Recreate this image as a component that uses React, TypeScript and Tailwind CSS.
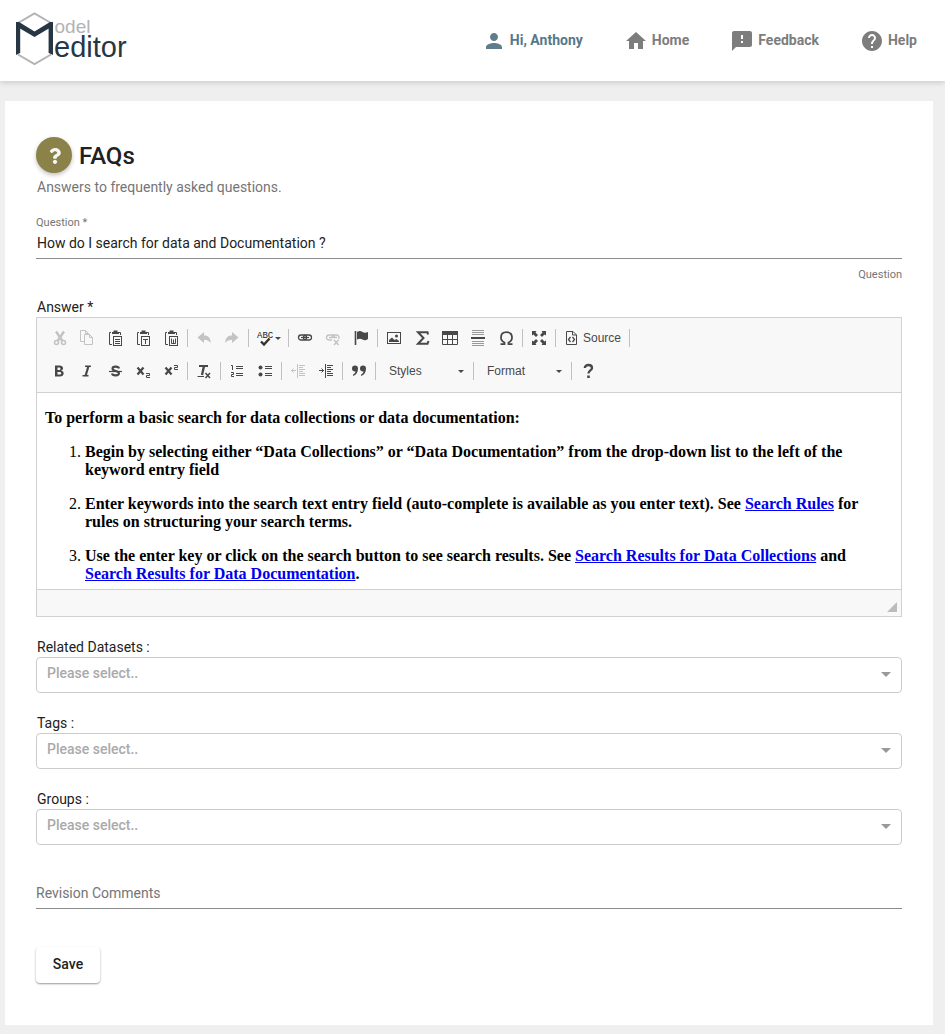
import type { ReactNode } from "react";
import { FaQuestion } from "react-icons/fa";
import { MdFeedback, MdHelp, MdHome, MdPerson } from "react-icons/md";

const sans = "font-['Liberation_Sans',Arial,sans-serif]";

function Logo() {
  return (
    <a href="#" aria-label="Model Meditor" className="block">
      <svg width="114" height="56" viewBox="0 0 114 56" aria-hidden="true">
        <path d="M3 12 L19.500 2.500 L36 12 M3 43.500 L19.500 53 L36 43.500" fill="none" stroke="#b3b3b3" strokeWidth="2" />
        <path d="M5.200 16V42M33.600 16V42" fill="none" stroke="#c4c4c4" strokeWidth="1" />
        <path d="M1 11 L4 11 L19.500 20.500 L35 11 L38 11 V44 L33.800 42 V17.500 L19.500 26 L5 17.500 V42 L1 44 Z" fill="#263645" />
        <text x="39.500" y="22" fontSize="19" fill="#b3b3b3" className={sans}>odel</text>
        <text x="39" y="46" fontSize="29" fill="#263645" className={sans}>editor</text>
      </svg>
    </a>
  );
}

function NavLink({ icon, label, active }: { icon: ReactNode; label: string; active?: boolean }) {
  return (
    <a
      href="#"
      className={`flex items-center gap-1 text-2xl ${active ? "text-[#607d8b]" : "text-[#7d7d7d]"}`}
    >
      {icon}
      <span className={`pb-0.5 text-sm font-bold ${active ? "text-[#56798a]" : "text-[#7d7d7d]"}`}>{label}</span>
    </a>
  );
}

function Glyph({ children, muted }: { children: ReactNode; muted?: boolean }) {
  return (
    <svg
      width="16"
      height="16"
      viewBox="0 0 16 16"
      fill="none"
      stroke="currentColor"
      className={muted ? "text-[#c3c3c3]" : "text-[#484848]"}
      aria-hidden="true"
    >
      {children}
    </svg>
  );
}

function Tool({ label, muted, children }: { label: string; muted?: boolean; children: ReactNode }) {
  return (
    <button type="button" aria-label={label} disabled={muted} className="flex h-7 w-7 items-center justify-center">
      <Glyph muted={muted}>{children}</Glyph>
    </button>
  );
}

function Separator() {
  return <span className="mx-0.5 h-[18px] w-px bg-[#c0c0c0]" />;
}

function SmallCaret() {
  return (
    <svg width="6" height="3" viewBox="0 0 6 3" className="pointer-events-none" aria-hidden="true">
      <path d="M0 0H6L3 3Z" fill="#484848" />
    </svg>
  );
}

function Clipboard({ children }: { children: ReactNode }) {
  return (
    <>
      <path d="M4 2.500H2.500V14.500H5M11 2.500H13.500V5" />
      <path d="M5 4V2H6.500V0.500H10.500V2H12V4Z" fill="currentColor" stroke="none" />
      <rect x="6.500" y="6.500" width="8" height="9" fill="#f8f8f8" />
      {children}
    </>
  );
}

function Combo({ label }: { label: string }) {
  return (
    <div className="relative flex h-7 items-center">
      <select
        aria-label={label}
        className={`h-7 w-[93px] appearance-none bg-transparent pl-[11px] text-xs text-[#484848] ${sans}`}
      >
        <option>{label}</option>
      </select>
      <span className="pointer-events-none absolute right-[7px]">
        <SmallCaret />
      </span>
    </div>
  );
}

function Toolbar() {
  return (
    <div role="toolbar" className="flex flex-col gap-[5px] border-b border-[#d1d1d1] bg-[#f8f8f8] px-2 pt-1.5 pb-[7px]">
      <div className="flex flex-wrap items-center">
        <Tool label="Cut" muted>
          <path d="M5 1.500L11.500 11M13 1.500L6.500 11" strokeWidth="2.400" />
          <circle cx="5.500" cy="12.500" r="2" strokeWidth="1.500" />
          <circle cx="12.500" cy="12.500" r="2" strokeWidth="1.500" />
        </Tool>
        <Tool label="Copy" muted>
          <path d="M5 11.500H1.500V0.500H6.500L9.500 3.500V4M6.500 0.500V3.500H9" />
          <path d="M5.500 4.500H10.500L13.500 7.500V14.500H5.500ZM10.500 4.500V7.500H13.500" fill="#f8f8f8" />
        </Tool>
        <Tool label="Paste">
          <Clipboard>
            <path d="M8 9.500H13M8 11.500H13M8 13.500H13" />
          </Clipboard>
        </Tool>
        <Tool label="Paste as plain text">
          <Clipboard>
            <path d="M8 9.500H13M10.500 9.500V14" />
          </Clipboard>
        </Tool>
        <Tool label="Paste from Word">
          <Clipboard>
            <path d="M8.500 8.500V13.500H12.500V8.500M10.500 9.500V13" />
          </Clipboard>
        </Tool>
        <Separator />
        <Tool label="Undo" muted>
          <path d="M1.500 7.500L8 2V5.500C12.500 5.500 14.500 8 14.800 13C13 10.500 11 9.800 8 9.800V13Z" fill="currentColor" stroke="none" />
        </Tool>
        <Tool label="Redo" muted>
          <path d="M14.500 7.500L8 2V5.500C3.500 5.500 1.500 8 1.200 13C3 10.500 5 9.800 8 9.800V13Z" fill="currentColor" stroke="none" />
        </Tool>
        <Separator />
        <button type="button" aria-label="Spell check" className="flex h-7 w-[35px] items-center gap-0.5 pl-1.5">
          <Glyph>
            <text x="0" y="8" fontSize="9" fill="#222" stroke="none" className="font-['Liberation_Mono',monospace]">ABC</text>
            <path d="M4 11.500L7 14.500L12.500 8.500" strokeWidth="2.400" stroke="#333" />
          </Glyph>
          <SmallCaret />
        </button>
        <Separator />
        <Tool label="Link">
          <rect x="1.500" y="5" width="8" height="5" rx="2.500" strokeWidth="1.300" />
          <rect x="6.500" y="5" width="8" height="5" rx="2.500" strokeWidth="1.300" />
          <path d="M4 7.500H12" strokeWidth="1.200" />
        </Tool>
        <Tool label="Unlink" muted>
          <path d="M7 10H4A2.500 2.500 0 0 1 4 5H7A2.500 2.500 0 0 1 9.500 7.500M7 7.500A2.500 2.500 0 0 1 9 5H12A2.500 2.500 0 0 1 13.500 9M4 7.500H12" strokeWidth="1.300" />
          <path d="M9 10L13.500 15M13.500 10L9 15" strokeWidth="1.500" />
        </Tool>
        <Tool label="Anchor">
          <path d="M2.500 1V15" strokeWidth="1.600" />
          <path d="M4 2C6.500 0.500 8 1 9.500 2C11 3 13 3 15 2V9C13 10.500 11 10.500 9.500 9.500C8 8.500 6 8.500 4 9.500Z" fill="currentColor" stroke="none" />
        </Tool>
        <Separator />
        <Tool label="Image">
          <rect x="1.500" y="2.500" width="13" height="11" />
          <path d="M3 12V10L6 7.500L8.500 10L10.500 9L13 11V12Z" fill="currentColor" stroke="none" />
          <circle cx="10.500" cy="6" r="1.500" fill="currentColor" stroke="none" />
        </Tool>
        <Tool label="Math">
          <path d="M14 4.500L13.500 2.200H4L9.500 8L4 13.800H13.500L14.500 11" strokeWidth="2" />
        </Tool>
        <Tool label="Table">
          <path d="M0 1H16V5H0Z" fill="currentColor" stroke="none" />
          <path d="M0.500 5V14.500H15.500V5M0 9.500H16M5.500 5V14.500M10.500 5V14.500" />
        </Tool>
        <Tool label="Horizontal line">
          <path d="M2 0.500H14M2 2.500H14M2 4.500H14M2 11.500H14M2 13.500H14M2 15.500H14" stroke="#999" />
          <path d="M1 8H15" strokeWidth="2" />
        </Tool>
        <Tool label="Special character">
          <path d="M2.500 14.200H6.500V12.500C4 11.500 3 9.500 3 7.500C3 4 5.500 2.200 8.500 2.200S14 4 14 7.500C14 9.500 13 11.500 10.500 12.500V14.200H14.500" strokeWidth="1.800" />
        </Tool>
        <Separator />
        <Tool label="Maximize">
          <path d="M1 1H5.500L4.500 2.500L7 5L5 7L2.500 4.500L1 5.500ZM15 1H10.500L11.500 2.500L9 5L11 7L13.500 4.500L15 5.500ZM1 15H5.500L4.500 13.500L7 11L5 9L2.500 11.500L1 10.500ZM15 15H10.500L11.500 13.500L9 11L11 9L13.500 11.500L15 10.500Z" fill="currentColor" stroke="none" />
        </Tool>
        <Separator />
        <button type="button" className={`flex h-7 w-[69px] items-center gap-[3px] pl-1.5 text-xs text-[#484848] ${sans}`}>
          <Glyph>
            <path d="M2.500 1.500H9L12.500 5V14.500H2.500ZM8.500 1.500V5H12.500" />
            <path d="M6.500 7L4.500 9.500L6.500 12M8.500 7L10.500 9.500L8.500 12" strokeWidth="1.300" />
          </Glyph>
          Source
        </button>
        <Separator />
      </div>
      <div className="flex flex-wrap items-center">
        <Tool label="Bold">
          <path d="M4 2.500H8.500C13 2.500 13 7.200 10 7.700C14 8 13.500 13.500 9 13.500H4Z" fill="currentColor" stroke="none" />
          <path d="M6.500 4.500H8C10 4.500 10 7 8 7H6.500ZM6.500 8.900H8.500C10.900 8.900 10.900 11.500 8.500 11.500H6.500Z" fill="#f8f8f8" stroke="none" />
        </Tool>
        <Tool label="Italic">
          <path d="M6 3.200H12M3.500 12.800H9.500" strokeWidth="1.400" />
          <path d="M9.500 3L6.500 13" strokeWidth="2.200" />
        </Tool>
        <Tool label="Strikethrough">
          <path d="M12 5.500C11.500 3 5.500 3 5.500 5.800C5.500 8.500 12 7.500 12 10.300C12 13 5.500 13 5 10.500" strokeWidth="2.100" />
          <path d="M2 8.500H15" strokeWidth="1.200" />
        </Tool>
        <Tool label="Subscript">
          <path d="M2.500 4.500L8.500 11.500M8.500 4.500L2.500 11.500" strokeWidth="2.200" />
          <path d="M11 10.500H14.500V12.500H11.500V14.500H15" />
        </Tool>
        <Tool label="Superscript">
          <path d="M2.500 4.500L8.500 11.500M8.500 4.500L2.500 11.500" strokeWidth="2.200" />
          <path d="M11 2.500H14.500V4.500H11.500V6.500H15" />
        </Tool>
        <Separator />
        <Tool label="Remove format">
          <path d="M3 3H12" strokeWidth="2" />
          <path d="M8 3L6 12" strokeWidth="2.300" />
          <path d="M1.500 13.500H8" />
          <path d="M9.500 10L14 15M14 10L9.500 15" strokeWidth="1.500" />
        </Tool>
        <Separator />
        <Tool label="Numbered list">
          <path d="M7 3.500H14M7 5.500H14M7 10.500H14M7 12.500H14" />
          <path d="M2 2.500H3.500V7M2 9.500H4.500V11.500H2.500V13.500H5" />
        </Tool>
        <Tool label="Bulleted list">
          <path d="M8 3.500H15M8 5.500H15M8 10.500H15M8 12.500H15" />
          <circle cx="3.500" cy="4.500" r="2" fill="currentColor" stroke="none" />
          <circle cx="3.500" cy="11.500" r="2" fill="currentColor" stroke="none" />
        </Tool>
        <Separator />
        <Tool label="Decrease indent" muted>
          <path d="M7.500 1V15M9 2.500H15M9 4.500H13M9 6.500H15M9 8.500H13M9 10.500H15M9 12.500H15M1 7.500H6M3.500 5.500L1.500 7.500L3.500 9.500" />
        </Tool>
        <Tool label="Increase indent">
          <path d="M7.500 1V15M9 2.500H15M9 4.500H13M9 6.500H15M9 8.500H13M9 10.500H15M9 12.500H15M1 7.500H6M3.500 5.500L5.500 7.500L3.500 9.500" />
        </Tool>
        <Separator />
        <Tool label="Block quote">
          <path d="M1 5.500A3 3 0 0 1 7 5.500C7 9.500 5 12 2 13V11.500C3.500 10.800 4.300 9.800 4.500 8.500C2.500 8.800 1 7.500 1 5.500ZM9 5.500A3 3 0 0 1 15 5.500C15 9.500 13 12 10 13V11.500C11.500 10.800 12.300 9.800 12.500 8.500C10.500 8.800 9 7.500 9 5.500Z" fill="currentColor" stroke="none" />
        </Tool>
        <Separator />
        <Combo label="Styles" />
        <Separator />
        <Combo label="Format" />
        <Separator />
        <Tool label="About">
          <path d="M4.800 5C4.800 1 12 1 12 5C12 7.500 8.500 7.500 8.500 10.500" strokeWidth="2.300" />
          <path d="M7.200 12.500H9.800V15H7.200Z" fill="currentColor" stroke="none" />
        </Tool>
      </div>
    </div>
  );
}

function DocLink({ children }: { children: ReactNode }) {
  return (
    <a href="#" className="text-[#0000ee] underline">
      {children}
    </a>
  );
}

function Editor() {
  return (
    <div className="border border-[#d1d1d1] bg-white">
      <Toolbar />
      <div
        role="textbox"
        aria-labelledby="answer-label"
        className="px-2 pt-4 pb-1.5 font-['Liberation_Serif','Times_New_Roman',serif] text-base leading-[18px] text-black"
      >
        <p className="font-bold">To perform a basic search for data collections or data documentation:</p>
        <ol className="mt-4 flex list-decimal flex-col gap-4 pl-10">
          <li>
            <strong>
              Begin by selecting either “Data Collections” or “Data Documentation” from the drop-down list to the left
              of the keyword entry field
            </strong>
          </li>
          <li>
            <strong>
              Enter keywords into the search text entry field (auto-complete is available as you enter text). See{" "}
              <DocLink>Search Rules</DocLink> for rules on structuring your search terms.
            </strong>
          </li>
          <li>
            <strong>
              Use the enter key or click on the search button to see search results. See{" "}
              <DocLink>Search Results for Data Collections</DocLink> and{" "}
              <DocLink>Search Results for Data Documentation</DocLink>.
            </strong>
          </li>
        </ol>
      </div>
      <div className="flex h-[27px] items-end justify-end border-t border-[#d1d1d1] bg-[#f8f8f8] pr-1 pb-1">
        <svg width="10" height="10" viewBox="0 0 10 10" aria-hidden="true">
          <path d="M10 0V10H0Z" fill="#bcbcbc" />
        </svg>
      </div>
    </div>
  );
}

function SelectField({ id, label }: { id: string; label: string }) {
  return (
    <div className="mt-5">
      <label htmlFor={id} className="block pl-px text-sm leading-5">
        {label}
      </label>
      <div className="relative">
        <select
          id={id}
          className="block h-9 w-full appearance-none rounded border border-[#ccc] bg-white pb-1 pl-2.5 text-sm font-medium text-[#aaa]"
        >
          <option>Please select..</option>
        </select>
        <svg
          width="10"
          height="5"
          viewBox="0 0 10 5"
          className="pointer-events-none absolute top-[15px] right-[11px]"
          aria-hidden="true"
        >
          <path d="M0 0H10L5 5Z" fill="#999" />
        </svg>
      </div>
    </div>
  );
}

export default function App() {
  return (
    <div className="min-h-screen bg-[#efefef] pb-[9px] font-[Roboto,sans-serif] text-[#212121]">
      <header className="flex h-[81px] items-center justify-between bg-white pr-7 pl-[15px] shadow-[0_2px_5px_rgba(0,0,0,0.14)]">
        <div className="pb-1">
          <Logo />
        </div>
        <nav className="flex items-center gap-[41px]">
          <NavLink active icon={<MdPerson />} label="Hi, Anthony" />
          <NavLink icon={<MdHome />} label="Home" />
          <NavLink icon={<MdFeedback />} label="Feedback" />
          <NavLink icon={<MdHelp />} label="Help" />
        </nav>
      </header>

      <main className="mt-5 mr-3 ml-[5px] bg-white px-[31px] pt-9 pb-[42px]">
        <div className="flex h-9 items-center gap-[7px]">
          <span className="flex size-9 items-center justify-center rounded-full bg-[#8a8248] pt-0.5 pl-0.5 text-base text-[#f5f5f5] shadow-[0_2px_4px_rgba(0,0,0,0.25)]">
            <FaQuestion />
          </span>
          <h1 className="pt-0.5 text-2xl font-medium">FAQs</h1>
        </div>
        <p className="mt-1 pl-px text-sm leading-5 text-[#757575]">Answers to frequently asked questions.</p>

        <form>
          <label htmlFor="question" className="mt-[18px] block text-[11px] leading-4 text-[#757575]">
            Question *
          </label>
          <input
            id="question"
            type="text"
            defaultValue="How do I search for data and Documentation ?"
            className="block h-7 w-full border-b border-[#8c8c8c] pb-[3px] pl-px text-sm"
          />
          <p className="mt-2 text-right text-[11px] leading-4 text-[#757575]">Question</p>

          <p id="answer-label" className="mt-3.5 pl-px text-sm leading-5">
            Answer *
          </p>
          <Editor />

          <SelectField id="datasets" label="Related Datasets :" />
          <SelectField id="tags" label="Tags :" />
          <SelectField id="groups" label="Groups :" />

          <input
            type="text"
            aria-label="Revision Comments"
            placeholder="Revision Comments"
            className="mt-9 block h-7 w-full border-b border-[#8c8c8c] pb-[3px] text-sm placeholder:text-[#757575]"
          />
          <button
            type="button"
            className="mt-[38px] h-9 w-16 rounded-sm bg-white pb-0.5 text-sm font-medium shadow-[0_1px_2px_rgba(0,0,0,0.4)]"
          >
            Save
          </button>
        </form>
      </main>
    </div>
  );
}
